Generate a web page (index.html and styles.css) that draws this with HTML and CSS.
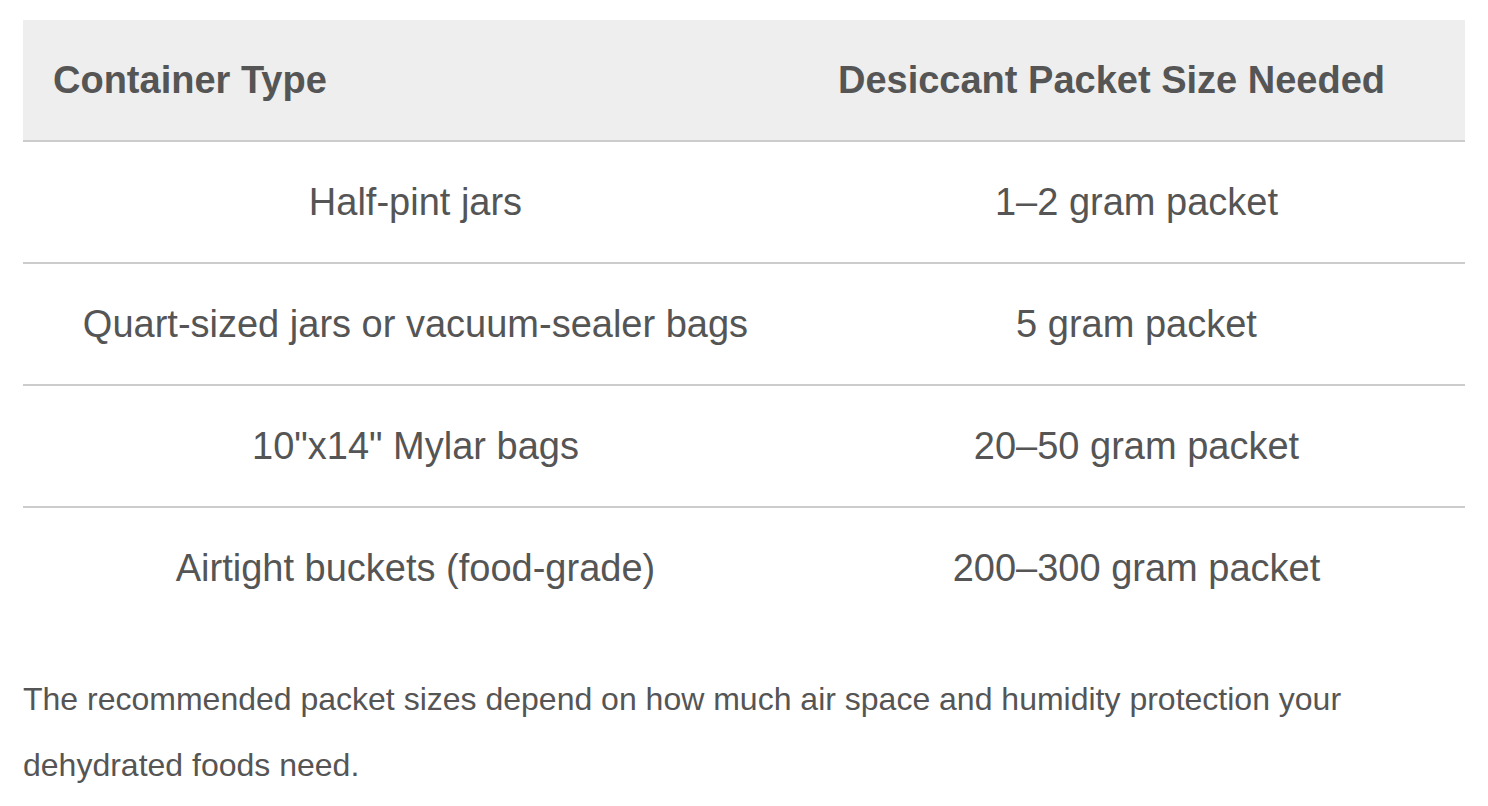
FILE: index.html
```html
<!DOCTYPE html>
<html lang="en">
<head>
<meta charset="utf-8">
<title>Desiccant packet sizes</title>
<link rel="stylesheet" href="styles.css">
</head>
<body>
<main class="content">
  <table class="sizes">
    <thead>
      <tr>
        <th>Container Type</th>
        <th>Desiccant Packet Size Needed</th>
      </tr>
    </thead>
    <tbody>
      <tr><td>Half-pint jars</td><td>1–2 gram packet</td></tr>
      <tr><td>Quart-sized jars or vacuum-sealer bags</td><td>5 gram packet</td></tr>
      <tr><td>10"x14" Mylar bags</td><td>20–50 gram packet</td></tr>
      <tr><td>Airtight buckets (food-grade)</td><td>200–300 gram packet</td></tr>
    </tbody>
  </table>
  <p class="note">The recommended packet sizes depend on how much air space and humidity protection your dehydrated foods need.</p>
</main>
</body>
</html>
```
FILE: styles.css
```css
html, body {
  margin: 0;
  padding: 0;
  background: #fff;
}
body {
  font-family: "Liberation Sans", Arial, sans-serif;
  color: #555;
}
.content {
  padding: 20px 23px 0 23px;
}
.sizes {
  width: 100%;
  border-collapse: collapse;
  font-size: 38px;
  line-height: 42px;
}
.sizes th {
  background: #eee;
  font-weight: bold;
  text-align: left;
  padding: 39px 30px 39px 30px;
  border-bottom: 2px solid #ccc;
}
.sizes td {
  text-align: center;
  padding: 39px 30px;
  font-weight: normal;
}
.sizes tbody tr + tr td {
  border-top: 2px solid #ccc;
}
.note {
  margin: 38px 0 0 0;
  font-size: 32px;
  line-height: 66px;
  max-width: 1340px;
}
```
